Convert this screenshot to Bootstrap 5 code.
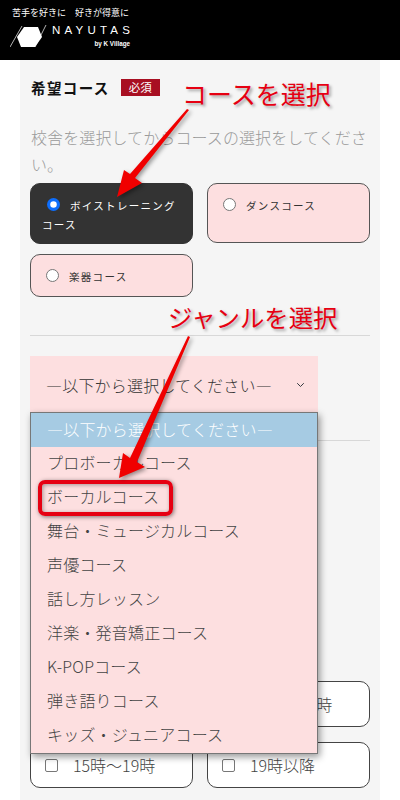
<!DOCTYPE html>
<html lang="ja">
<head>
<meta charset="utf-8">
<title>NAYUTAS</title>
<link rel="stylesheet" href="https://cdn.jsdelivr.net/npm/bootstrap@5.3.0/dist/css/bootstrap.min.css">
<style>
html,body{height:800px;overflow:hidden}
body{background:#fff;font-family:"Noto Sans CJK JP","Noto Sans",sans-serif;font-weight:300;color:#333;position:relative}
.site-head{height:60px;background:#000;color:#fff;padding:7px 0 0 12px}
.tagline{font-size:9px;line-height:12px;font-weight:400}
.brand{margin:3px 0 0 -2px;height:28px}
.brand-name{font-family:"Liberation Sans",sans-serif;font-size:11.5px;font-weight:400;letter-spacing:4.2px;line-height:11px;margin-top:3px;white-space:nowrap}
.brand-sub{font-family:"Liberation Sans",sans-serif;font-size:6.3px;font-weight:700;line-height:8px;text-align:right;margin:4px 0 0}
.brand-text{width:78px;margin-left:4px}
.panel-main{width:360px;height:740px;margin-left:20px;background:#f5f5f5;padding:0 10px}
.head-row{height:52px;padding:19px 1px 0;gap:11px}
.field-title{font-size:14.5px;line-height:17px;font-weight:700;color:#111;letter-spacing:1.4px}
.req-tag{background:#a80f22;color:#fff;font-size:11.5px;line-height:17px;width:39px;text-align:center;font-weight:400}
.hint-wrap{padding-top:20px;height:71px}
.hint{font-size:16px;line-height:27px;color:#999;margin:-8px 0 0;padding:0 0 0 1px;letter-spacing:.1px}
.opt-grid{display:grid;grid-template-columns:163px 163px;column-gap:14px;row-gap:10px}
.opt-box{border:1px solid #555;border-radius:10px;background:#fddfe0;font-size:10.5px;letter-spacing:1.3px;line-height:19px;color:#333;padding:12px 10px 0 15px;font-weight:400}
.opt-box .form-check-input{width:13px;height:13px;margin:0 10px 0 0;border-color:#777;float:none;vertical-align:-1px}
.opt-on{background:#333;border-color:#333;color:#fff;padding:12px 10px 0 11px;height:61px}
.opt-on .form-check-input{margin-left:5px;border:0}
.opt-two{height:60px}
.opt-three{height:43px}
.rule-line{border:0;border-top:1px solid #d8d8d8;opacity:1;margin:0}
.rule-a{margin-top:38px}
.genre-select.form-select{width:288px;height:58px;margin-top:20px;border:0;border-radius:0;background-color:#fddfe0;background-size:11px 8px;font-size:16px;font-weight:300;color:#333;padding:0 30px 0 16px;letter-spacing:.2px}
.rule-b{margin-top:26px}
.time-grid{display:grid;grid-template-columns:163px 163px;column-gap:14px;row-gap:15px;margin-top:240px}
.time-box{height:46px;border:1px solid #444;border-radius:10px;background:#fff;font-size:16px;color:#444;display:flex;align-items:center;padding-left:14px;gap:15px}
.time-box .form-check-input{width:13px;height:13px;margin:0;border-color:#777;border-radius:2px;flex:none}
.open-menu{position:absolute;left:30px;top:412px;width:288px;background:#fddfe0;border:1px solid #777;box-shadow:2px 3px 7px rgba(0,0,0,.4);border-radius:0;font-size:16px}
.open-menu .list-group-item{height:34px;line-height:30px;padding:0 0 4px 16px;background:transparent;border:0;color:#444;border-radius:0;letter-spacing:.2px}
.open-menu .list-group-item.item-active{background:#a6cbe3;color:#fff;line-height:32px}
.callout{position:absolute;color:#e60012;font-weight:400;line-height:1;white-space:nowrap;text-shadow:2px 2px 3px rgba(0,0,0,.35)}
.call-a{left:182px;top:81px;font-size:25px}
.call-b{left:168px;top:305px;font-size:24.4px}
.arrow-layer{position:absolute;left:0;top:0;width:400px;height:800px;pointer-events:none;filter:drop-shadow(2px 2px 2px rgba(0,0,0,.4))}
.pick-ring{position:absolute;left:38px;top:480px;width:135px;height:36px;border:4px solid #e60012;border-radius:7px;box-shadow:1px 1px 4px rgba(0,0,0,.5),inset 1px 1px 4px rgba(0,0,0,.35)}
</style>
</head>
<body>
<header class="site-head">
  <div class="tagline">苦手を好きに　好きが得意に</div>
  <div class="brand d-flex">
    <svg width="38" height="28" viewBox="0 0 38 28" aria-hidden="true">
      <polygon points="14,5 28,5 32,15 25,25 11,25 7,15" fill="#fff"/>
      <line x1="0" y1="25" x2="12" y2="4" stroke="#fff" stroke-width=".7"/>
      <line x1="25" y1="25" x2="36" y2="3" stroke="#fff" stroke-width=".7"/>
    </svg>
    <div class="brand-text">
      <div class="brand-name">NAYUTAS</div>
      <div class="brand-sub">by K Village</div>
    </div>
  </div>
</header>
<main class="panel-main">
  <div class="head-row d-flex align-items-start">
    <span class="field-title">希望コース</span>
    <span class="req-tag">必須</span>
  </div>
  <div class="hint-wrap"><p class="hint">校舎を選択してからコースの選択をしてください。</p></div>
  <div class="opt-grid">
    <label class="opt-box opt-on"><input class="form-check-input" type="radio" name="course" checked>ボイストレーニングコース</label>
    <label class="opt-box opt-two"><input class="form-check-input" type="radio" name="course">ダンスコース</label>
    <label class="opt-box opt-three"><input class="form-check-input" type="radio" name="course">楽器コース</label>
  </div>
  <hr class="rule-line rule-a">
  <select class="form-select genre-select"><option>—以下から選択してください—</option></select>
  <hr class="rule-line rule-b">
  <div class="time-grid">
    <div class="time-box"></div>
    <label class="time-box"><input class="form-check-input" type="checkbox">12時〜15時</label>
    <label class="time-box"><input class="form-check-input" type="checkbox">15時〜19時</label>
    <label class="time-box"><input class="form-check-input" type="checkbox">19時以降</label>
  </div>
</main>
<div class="list-group open-menu">
  <div class="list-group-item item-active">—以下から選択してください—</div>
  <div class="list-group-item">プロボーカルコース</div>
  <div class="list-group-item">ボーカルコース</div>
  <div class="list-group-item">舞台・ミュージカルコース</div>
  <div class="list-group-item">声優コース</div>
  <div class="list-group-item">話し方レッスン</div>
  <div class="list-group-item">洋楽・発音矯正コース</div>
  <div class="list-group-item">K-POPコース</div>
  <div class="list-group-item">弾き語りコース</div>
  <div class="list-group-item">キッズ・ジュニアコース</div>
</div>
<div class="pick-ring"></div>
<svg class="arrow-layer" viewBox="0 0 400 800" aria-hidden="true">
  <polygon points="189,110 135,178 142,183 117,197 124,170 130,174 187,109" fill="#f00000"/>
  <polygon points="190,337 137,462 145,467 119,478 123,453 130,458 188,336" fill="#f00000"/>
</svg>
<div class="callout call-a">コースを選択</div>
<div class="callout call-b">ジャンルを選択</div>
<script src="https://cdn.jsdelivr.net/npm/bootstrap@5.3.0/dist/js/bootstrap.bundle.min.js"></script>
</body>
</html>
